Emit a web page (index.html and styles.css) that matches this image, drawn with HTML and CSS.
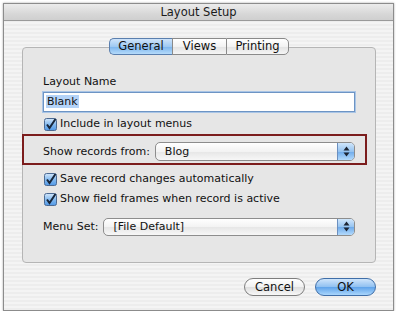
FILE: index.html
```html
<!DOCTYPE html>
<html>
<head>
<meta charset="utf-8">
<link rel="stylesheet" href="styles.css">
</head>
<body>
<div class="window">
  <div class="titlebar">Layout Setup</div>
  <div class="body">
    <div class="tabs">
      <div class="tab selected">General</div>
      <div class="tab">Views</div>
      <div class="tab last">Printing</div>
    </div>
    <div class="group">
      <div class="label">Layout Name</div>
      <div class="textfield"><span class="sel">Blank</span></div>
      <div class="check-row first">
        <svg class="cb" width="13" height="13" viewBox="0 0 13 13"><defs><linearGradient id="g1" x1="0" y1="0" x2="0" y2="1"><stop offset="0" stop-color="#d2e6fa"/><stop offset="0.5" stop-color="#86bbef"/><stop offset="1" stop-color="#4e97e6"/></linearGradient></defs><rect x="0.5" y="0.5" width="12" height="12" rx="2" fill="url(#g1)" stroke="#4c6a92"/><path d="M3 6.5 L5.5 10 L11.5 1" fill="none" stroke="#17263a" stroke-width="2"/></svg>
        <span>Include in layout menus</span>
      </div>
      <div class="highlight">
        <span class="plabel">Show records from:</span>
        <div class="popup wide">
          <span class="ptext">Blog</span>
          <span class="cap"><svg width="7" height="11" viewBox="0 0 7 11"><path d="M3.5 0.5 L6.5 4.5 L0.5 4.5 Z M3.5 10.5 L6.5 6.5 L0.5 6.5 Z" fill="#1d2533"/></svg></span>
        </div>
      </div>
      <div class="check-row save">
        <svg class="cb" width="13" height="13" viewBox="0 0 13 13"><rect x="0.5" y="0.5" width="12" height="12" rx="2" fill="url(#g1)" stroke="#4c6a92"/><path d="M3 6.5 L5.5 10 L11.5 1" fill="none" stroke="#17263a" stroke-width="2"/></svg>
        <span>Save record changes automatically</span>
      </div>
      <div class="check-row frames">
        <svg class="cb" width="13" height="13" viewBox="0 0 13 13"><rect x="0.5" y="0.5" width="12" height="12" rx="2" fill="url(#g1)" stroke="#4c6a92"/><path d="M3 6.5 L5.5 10 L11.5 1" fill="none" stroke="#17263a" stroke-width="2"/></svg>
        <span>Show field frames when record is active</span>
      </div>
      <div class="menu-row">
        <span class="plabel">Menu Set:</span>
        <div class="popup">
          <span class="ptext">[File Default]</span>
          <span class="cap"><svg width="7" height="11" viewBox="0 0 7 11"><path d="M3.5 0.5 L6.5 4.5 L0.5 4.5 Z M3.5 10.5 L6.5 6.5 L0.5 6.5 Z" fill="#1d2533"/></svg></span>
        </div>
      </div>
    </div>
    <div class="buttons">
      <div class="btn">Cancel</div>
      <div class="btn ok">OK</div>
    </div>
  </div>
</div>
</body>
</html>
```
FILE: styles.css
```css
html, body {
  margin: 0;
  padding: 0;
  background: #ffffff;
}
body {
  font-family: "DejaVu Sans", "Liberation Sans", sans-serif;
  font-size: 11px;
  color: #111;
}
.window {
  margin: 3px 0 0 3px;
  width: 391px;
  height: 308px;
  box-sizing: border-box;
  border: 1px solid #8c8c8c;
  box-shadow: 0 0 2px rgba(0,0,0,0.35);
  background: repeating-linear-gradient(to bottom, #ededed 0, #ededed 2px, #f4f4f4 2px, #f4f4f4 4px);
  display: flex;
  flex-direction: column;
}
.titlebar {
  height: 16px;
  line-height: 16px;
  text-align: center;
  font-size: 11.5px;
  color: #1a1a1a;
  background: linear-gradient(to bottom, #ececec, #d8d8d8 60%, #cfcfcf);
  border-bottom: 1px solid #9a9a9a;
}
.body {
  padding: 17px 17px 0 18px;
  display: flex;
  flex-direction: column;
}
.tabs {
  display: flex;
  justify-content: center;
  position: relative;
  z-index: 1;
  height: 17px;
}
.tab {
  height: 17px;
  box-sizing: border-box;
  line-height: 15px;
  border: 1px solid #8a8a8a;
  border-right: none;
  background: linear-gradient(to bottom, #ffffff, #f2f2f2 50%, #e2e2e2 51%, #f5f5f5);
  font-size: 11.5px;
  text-align: center;
  width: 54px;
}
.tab:first-child { border-radius: 5px 0 0 5px; }
.tab.last { border-right: 1px solid #8a8a8a; border-radius: 0 5px 5px 0; width: 63px; }
.tab.selected {
  background: linear-gradient(to bottom, #cfe4fa, #9fc9f2 50%, #7ab3ec 51%, #b5dbfb);
  border-color: #5a7fae;
  width: 63px;
}
.group {
  margin-top: -8px;
  height: 216px;
  box-sizing: border-box;
  border: 1px solid #b5b5b5;
  border-radius: 4px;
  background: #e6e6e6;
  padding: 27px 20px 0 20px;
  display: flex;
  flex-direction: column;
}
.label {
  height: 14px;
  line-height: 14px;
}
.textfield {
  margin-top: 3px;
  height: 20px;
  box-sizing: border-box;
  border: 1px solid #6d94c4;
  box-shadow: 0 0 0 1px #a9c5e6;
  background: #fff;
  padding: 2px 0 0 2px;
  line-height: 14px;
}
.sel {
  background: #b4d3f8;
  padding: 0 1px;
}
.check-row {
  height: 14px;
  line-height: 14px;
  display: flex;
  align-items: center;
  gap: 3px;
  padding-left: 1px;
}
.check-row.first { margin-top: 5px; }
.check-row.save { margin-top: 7px; }
.check-row.frames { margin-top: 6px; }
.cb { flex: none; }
.highlight {
  margin: 3px -12px 0 -21px;
  height: 31px;
  box-sizing: border-box;
  border: 2px solid #7c1d1d;
  padding: 6px 10px 0 19px;
  display: flex;
  align-items: flex-start;
}
.plabel {
  line-height: 19px;
  margin-right: 5px;
}
.popup {
  flex: 1;
  height: 19px;
  box-sizing: border-box;
  border: 1px solid #8d8d8d;
  border-radius: 5px;
  background: linear-gradient(to bottom, #ffffff, #f3f3f3 50%, #e6e6e6 51%, #f7f7f7);
  display: flex;
  align-items: center;
  overflow: hidden;
}
.ptext {
  flex: 1;
  padding-left: 9px;
  line-height: 17px;
}
.cap {
  width: 16px;
  align-self: stretch;
  border-left: 1px solid #6b8fbf;
  background: linear-gradient(to bottom, #d0e6fb, #95c3f0 50%, #6eaaea 51%, #b3dafc);
  display: flex;
  align-items: center;
  justify-content: center;
}
.menu-row {
  margin-top: 11px;
  display: flex;
  align-items: center;
}
.menu-row .popup { height: 18px; }
.buttons {
  margin-top: 15px;
  display: flex;
  justify-content: flex-end;
  gap: 10px;
}
.btn {
  width: 61px;
  height: 18px;
  box-sizing: border-box;
  border: 1px solid #7d7d7d;
  border-radius: 9px;
  text-align: center;
  line-height: 16px;
  font-size: 11.5px;
  background: linear-gradient(to bottom, #ffffff, #f1f1f1 50%, #dedede 51%, #f8f8f8);
}
.btn.ok {
  border-color: #3f6ea8;
  background: linear-gradient(to bottom, #cfe5fb, #8fc0f1 50%, #5fa3ea 51%, #a9d6fc);
}
```
